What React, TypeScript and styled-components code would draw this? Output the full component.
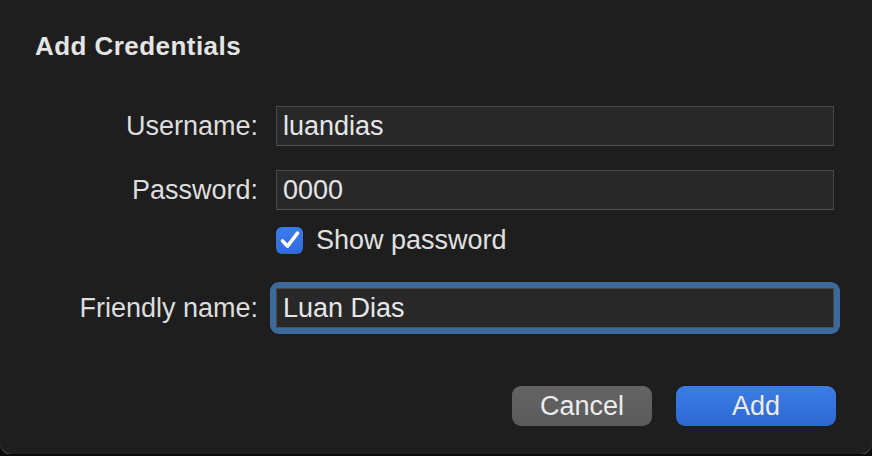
import React from "react";
import styled, { createGlobalStyle } from "styled-components";

const GlobalStyle = createGlobalStyle`
  html, body {
    margin: 0;
    padding: 0;
    background: #0b0b0b;
  }
  body {
    font-family: "Liberation Sans", Arial, sans-serif;
    -webkit-font-smoothing: antialiased;
  }
`;

const Sheet = styled.div`
  width: 872px;
  height: 454px;
  box-sizing: border-box;
  background: #1e1e1f;
  border-radius: 0 0 12px 12px;
  box-shadow: 0 1px 0 #575757;
  padding: 30px 36px 0 35px;
  display: flex;
  flex-direction: column;
`;

const Title = styled.h1`
  margin: 0;
  font-size: 26px;
  line-height: 32px;
  font-weight: 700;
  letter-spacing: 0.45px;
  color: #e4e4e4;
`;

const Form = styled.div`
  margin-top: 44px;
  display: grid;
  grid-template-columns: 223px 1fr;
  column-gap: 18px;
  align-items: center;
`;

const Label = styled.label<{ $top?: number }>`
  justify-self: end;
  font-size: 27px;
  line-height: 40px;
  color: #dddddd;
  margin-top: ${(p) => p.$top ?? 0}px;
  white-space: nowrap;
`;

const FieldSlot = styled.div<{ $top?: number }>`
  margin-top: ${(p) => p.$top ?? 0}px;
  margin-right: 2px;
`;

const Field = styled.div`
  height: 40px;
  box-sizing: border-box;
  background: #282828;
  border: 1px solid #484848;
  border-bottom-color: #525252;
  padding: 0 6px;
  font-size: 27px;
  line-height: 38px;
  color: #e6e6e6;
`;

const FocusRing = styled.div`
  margin: -6px;
  padding: 6px;
  border-radius: 9px;
  background: #3d6a9c;
`;

const CheckRow = styled.div`
  grid-column: 2;
  margin-top: 16px;
  display: flex;
  align-items: center;
  gap: 13px;
  font-size: 27px;
  line-height: 28px;
  color: #e0e0e0;
`;

const CheckBox = styled.span`
  width: 27px;
  height: 27px;
  border-radius: 6px;
  background: linear-gradient(#3a7cf0, #2f6ad8);
  display: flex;
  align-items: center;
  justify-content: center;
`;

const Actions = styled.div`
  margin-top: 58px;
  display: flex;
  justify-content: flex-end;
  gap: 24px;
`;

const Button = styled.button<{ $primary?: boolean }>`
  height: 40px;
  width: ${(p) => (p.$primary ? 160 : 140)}px;
  border: none;
  border-radius: 9px;
  font-family: inherit;
  font-size: 27px;
  color: #ececec;
  background: ${(p) =>
    p.$primary
      ? "linear-gradient(#3a7de6, #2e69d2)"
      : "linear-gradient(#646464, #5a5a5a)"};
  padding: 0;
`;

export default function App() {
  return (
    <>
      <GlobalStyle />
      <Sheet>
        <Title>Add Credentials</Title>
        <Form>
          <Label>Username:</Label>
          <FieldSlot>
            <Field>luandias</Field>
          </FieldSlot>

          <Label $top={24}>Password:</Label>
          <FieldSlot $top={24}>
            <Field>0000</Field>
          </FieldSlot>

          <CheckRow>
            <CheckBox>
              <svg width="22" height="22" viewBox="0 0 20 20">
                <path
                  d="M3.2 10.8 L7.8 15.6 L16.8 3.8"
                  fill="none"
                  stroke="#ffffff"
                  strokeWidth="3.2"
                  strokeLinecap="round"
                  strokeLinejoin="round"
                />
              </svg>
            </CheckBox>
            Show password
          </CheckRow>

          <Label $top={34}>Friendly name:</Label>
          <FieldSlot $top={34}>
            <FocusRing>
              <Field>Luan Dias</Field>
            </FocusRing>
          </FieldSlot>
        </Form>
        <Actions>
          <Button>Cancel</Button>
          <Button $primary>Add</Button>
        </Actions>
      </Sheet>
    </>
  );
}
